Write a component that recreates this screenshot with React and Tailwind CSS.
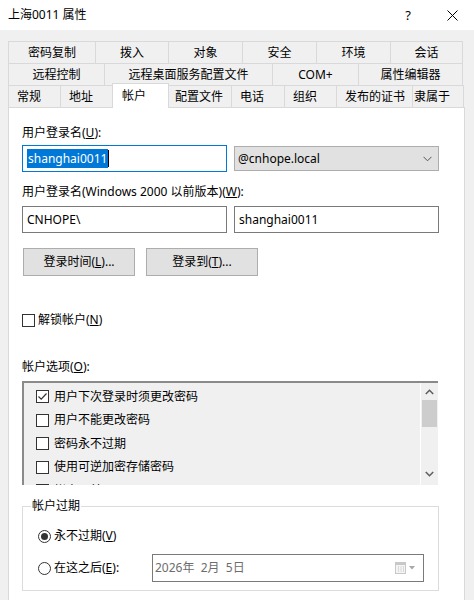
import React from 'react';

function Key({ k }) {
    return <span className="underline">{k}</span>;
}

function CheckBox({ checked }) {
    return (
        <span className="w-[13px] h-[13px] border border-[#333] bg-white flex items-center justify-center shrink-0">
            {checked && (
                <svg width="11" height="11" viewBox="0 0 11 11">
                    <polyline points="1.5,5.5 4.2,8.2 9.5,2.5" fill="none" stroke="#333" strokeWidth="1.2" />
                </svg>
            )}
        </span>
    );
}

function Radio({ checked }) {
    return (
        <span className="w-[13px] h-[13px] rounded-full border border-[#333] bg-white flex items-center justify-center shrink-0">
            {checked && <span className="w-[7px] h-[7px] rounded-full bg-[#333]" />}
        </span>
    );
}

const row1 = [
    ['密码复制', 'w-[87px]'],
    ['拨入', 'w-[73px]'],
    ['对象', 'w-[74px]'],
    ['安全', 'w-[74px]'],
    ['环境', 'w-[74px]'],
    ['会话', 'w-[73px] border-r'],
];

const row2 = [
    ['远程控制', 'w-[96px]'],
    ['远程桌面服务配置文件', 'w-[168px]'],
    ['COM+', 'w-[86px]'],
    ['属性编辑器', 'w-[105px] border-r'],
];

const options = ['用户下次登录时须更改密码', '用户不能更改密码', '密码永不过期', '使用可逆加密存储密码', '帐户已禁用'];

export default function App() {
    return (
        <div className="w-[474px] h-[600px] overflow-hidden bg-[#f0f0f0] text-[12px] leading-4 text-black font-['Noto_Sans','Noto_Sans_CJK_SC',sans-serif]">
            {/* Title bar */}
            <div className="h-[30px] bg-white flex items-center pl-2 pr-0">
                <span className="flex-1">上海0011 属性</span>
                <span className="w-[14px] text-center text-[13px] mr-[32px]">?</span>
                <svg width="11" height="11" viewBox="0 0 11 11" className="mr-[16px]">
                    <line x1="0.5" y1="0.5" x2="10.5" y2="10.5" stroke="#000" strokeWidth="1" />
                    <line x1="10.5" y1="0.5" x2="0.5" y2="10.5" stroke="#000" strokeWidth="1" />
                </svg>
            </div>

            {/* Tabs */}
            <div className="pt-[11px] pl-2">
                <div className="flex h-[22px]">
                    {row1.map(([t, c]) => (
                        <div key={t} className={`${c} h-[22px] border-t border-l border-[#d9d9d9] flex items-center justify-center`}>
                            {t}
                        </div>
                    ))}
                </div>
                <div className="flex h-[22px]">
                    {row2.map(([t, c]) => (
                        <div key={t} className={`${c} h-[22px] border-t border-l border-[#d9d9d9] flex items-center justify-center`}>
                            {t}
                        </div>
                    ))}
                </div>
                <div className="flex h-[22px] items-start">
                    <div className="w-[52px] h-[22px] border-t border-l border-[#d9d9d9] flex items-center pl-[8px]">常规</div>
                    <div className="w-[52px] h-[22px] border-t border-l border-[#d9d9d9] flex items-center pl-[8px]">地址</div>
                    <div className="relative z-10 w-[57px] h-[25px] -mt-[2px] bg-white border-t border-x border-[#d9d9d9] flex items-start pt-[4px] pl-[9px]">
                        帐户
                    </div>
                    <div className="w-[62px] h-[22px] border-t border-[#d9d9d9] flex items-center pl-[6px]">配置文件</div>
                    <div className="w-[53px] h-[22px] border-t border-l border-[#d9d9d9] flex items-center pl-[8px]">电话</div>
                    <div className="w-[52px] h-[22px] border-t border-l border-[#d9d9d9] flex items-center pl-[8px]">组织</div>
                    <div className="w-[76px] h-[22px] border-t border-l border-[#d9d9d9] flex items-center pl-[8px]">发布的证书</div>
                    <div className="w-[52px] h-[22px] border-t border-x border-[#d9d9d9] flex items-center pl-[1px]">隶属于</div>
                </div>

                {/* Panel */}
                <div className="w-[457px] h-[520px] bg-white border border-[#d9d9d9] pl-[13px] pt-[17px]">
                    <div>
                        用户登录名(<Key k="U" />):
                    </div>
                    <div className="flex items-start gap-[7px] mt-[4px]">
                        <div className="w-[205px] h-[27px] border border-[#0078d7] flex items-center pl-[4px]">
                            <span className="bg-[#0078d7] text-white px-[1px] leading-[19px]">shanghai0011</span>
                            <span className="w-[1px] h-[17px] bg-black" />
                        </div>
                        <div className="w-[205px] h-[25px] mt-[1px] border border-[#adadad] bg-[#e1e1e1] flex items-center pl-[3px] pr-[6px]">
                            <span className="flex-1">@cnhope.local</span>
                            <svg width="9" height="6" viewBox="0 0 9 6">
                                <polyline points="0.5,0.8 4.5,4.8 8.5,0.8" fill="none" stroke="#555" strokeWidth="1" />
                            </svg>
                        </div>
                    </div>

                    <div className="mt-[12px]">
                        用户登录名(Windows 2000 以前版本)(<Key k="W" />):
                    </div>
                    <div className="flex gap-[7px] mt-[6px]">
                        <div className="w-[205px] h-[27px] border border-[#7a7a7a] flex items-center pl-[4px]">CNHOPE\</div>
                        <div className="w-[205px] h-[27px] border border-[#7a7a7a] flex items-center pl-[4px]">shanghai0011</div>
                    </div>

                    <div className="flex gap-[11px] mt-[15px] ml-[1px]">
                        <div className="w-[112px] h-[28px] border border-[#adadad] bg-[#e1e1e1] flex items-center justify-center">
                            登录时间(<Key k="L" />)...
                        </div>
                        <div className="w-[112px] h-[28px] border border-[#adadad] bg-[#e1e1e1] flex items-center justify-center">
                            登录到(<Key k="T" />)...
                        </div>
                    </div>

                    <div className="flex items-center gap-[3px] mt-[36px]">
                        <CheckBox />
                        <span>
                            解锁帐户(<Key k="N" />)
                        </span>
                    </div>

                    <div className="mt-[31px]">
                        帐户选项(<Key k="O" />):
                    </div>

                    {/* Options list */}
                    <div className="w-[416px] h-[104px] mt-[6px] bg-[#f0f0f0] border-t-2 border-l-2 border-[#8a8a8a] flex overflow-hidden">
                        <div className="flex-1 pt-[2px] pl-[12px] border-r border-white">
                            {options.map((o, i) => (
                                <div key={o} className="h-[23.5px] flex items-center gap-[5px]">
                                    <CheckBox checked={i === 0} />
                                    <span>{o}</span>
                                </div>
                            ))}
                        </div>
                        <div className="w-[17px] flex flex-col items-center">
                            <div className="h-[17px] flex items-center justify-center">
                                <svg width="9" height="6" viewBox="0 0 9 6">
                                    <polyline points="0.8,5 4.5,1.3 8.2,5" fill="none" stroke="#606060" strokeWidth="1.6" />
                                </svg>
                            </div>
                            <div className="w-[15px] h-[27px] bg-[#cdcdcd]" />
                            <div className="flex-1" />
                            <div className="h-[18px] flex items-start justify-center pt-[4px]">
                                <svg width="9" height="6" viewBox="0 0 9 6">
                                    <polyline points="0.8,1 4.5,4.7 8.2,1" fill="none" stroke="#606060" strokeWidth="1.6" />
                                </svg>
                            </div>
                        </div>
                    </div>

                    {/* Account expires group */}
                    <div className="relative w-[417px] h-[85px] mt-[21px] border border-[#dcdcdc] pl-[15px] pt-[21px]">
                        <span className="absolute -top-[9px] left-[8px] bg-white px-[1px]">帐户过期</span>
                        <div className="flex items-center gap-[3px] h-[16px]">
                            <Radio checked />
                            <span>
                                永不过期(<Key k="V" />)
                            </span>
                        </div>
                        <div className="flex items-center mt-[10px]">
                            <div className="flex items-center gap-[3px] w-[114px]">
                                <Radio />
                                <span>
                                    在这之后(<Key k="E" />):
                                </span>
                            </div>
                            <div className="w-[272px] h-[28px] border border-[#7a7a7a] bg-white flex items-center pl-[2px] pr-[6px] text-[#6d6d6d]">
                                <span className="flex-1 whitespace-pre">2026年  2月  5日</span>
                                <svg width="22" height="13" viewBox="0 0 22 13">
                                    <rect x="0.5" y="0.5" width="10" height="11" fill="#f4f4f4" stroke="#c8c8c8" />
                                    <rect x="0.5" y="0.5" width="10" height="2.5" fill="#c8c8c8" />
                                    <path d="M3 5h1M5.5 5h1M8 5h1M3 7h1M5.5 7h1M8 7h1M3 9h1M5.5 9h1M8 9h1" stroke="#c0c0c0" />
                                    <polygon points="14,4 20,4 17,7.5" fill="#a8a8a8" />
                                </svg>
                            </div>
                        </div>
                    </div>
                </div>
            </div>
        </div>
    );
}
